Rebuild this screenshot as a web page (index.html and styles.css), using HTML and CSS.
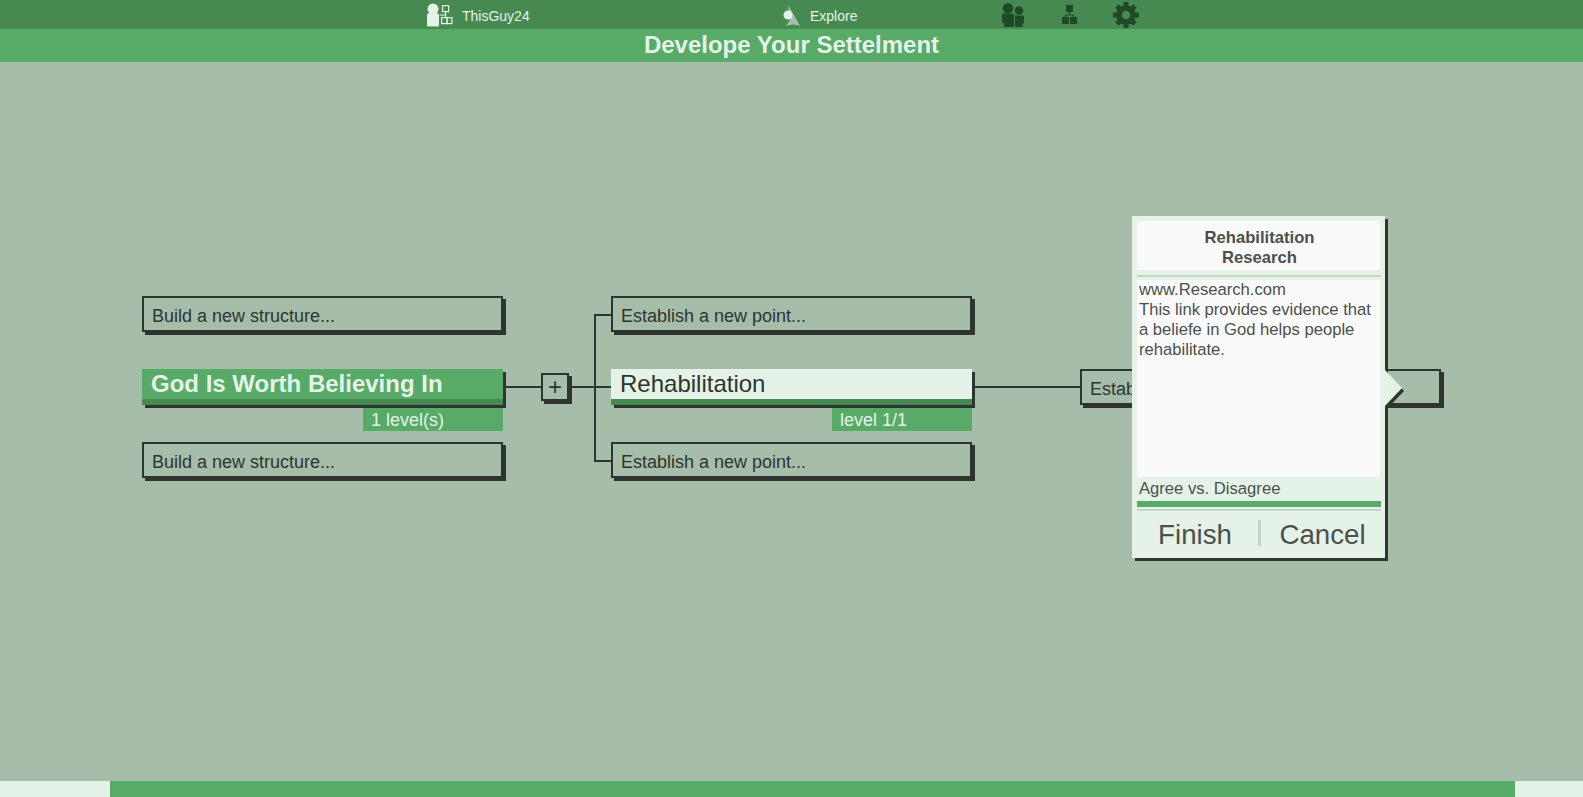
FILE: index.html
```html
<!DOCTYPE html>
<html lang="en">

<head>
    <meta charset="UTF-8" />
    <title>Develope Your Settelment</title>
    <link rel="stylesheet" href="styles.css">
</head>

<body>
    <nav class="top-bar">
        <a class="nav-item user-item">
            <svg class="nav-icon" width="26" height="26" viewBox="0 0 26 26">
                <ellipse cx="6" cy="7" rx="5.500" ry="5.500" fill="#e4f2e7"/>
                <path fill="#e4f2e7" d="M2 11h8l2 1.500v11q0 1-1 1H1q-1 0-1-1v-11z"/>
                <g fill="none" stroke="#e4f2e7" stroke-width="1.200">
                    <rect x="15.600" y="3.600" width="6" height="6"/>
                    <rect x="14.600" y="15.600" width="5.500" height="6"/>
                    <rect x="20.100" y="15.600" width="4.800" height="6"/>
                    <path d="M18.600 9.600v3.400h-6M18.600 13v2.600"/>
                </g>
            </svg>
            ThisGuy24
        </a>
        <a class="nav-item explore-item">
            <svg class="nav-icon" width="20" height="24" viewBox="0 0 20 24">
                <path fill="#a7bfab" d="M6 2Q12 12 18 23 11 20 4 23L8 17z"/>
                <circle cx="6" cy="12" r="4.500" fill="#e4f2e7"/>
            </svg>
            Explore
        </a>
        <svg class="tool people-tool" width="22" height="24" viewBox="0 0 22 24">
            <g fill="#1f4a28">
                <circle cx="6" cy="5.300" r="5.300"/>
                <path d="M1 10.500h10l1 1.500v12H2v-4H0v-8z"/>
                <circle cx="17" cy="7.500" r="4.300"/>
                <path d="M13 12.500h8l1 1v7h-1.500V24H13z"/>
            </g>
        </svg>
        <svg class="tool tree-tool" width="15" height="19" viewBox="0 0 15 19">
            <g fill="#1f4a28">
                <rect x="4" y="0" width="7" height="7"/>
                <rect x="0" y="12" width="7" height="7"/>
                <rect x="8" y="12" width="7" height="7"/>
            </g>
            <path fill="none" stroke="#1f4a28" d="M7.500 7v3M3.500 12v-2h8v2"/>
        </svg>
        <svg class="tool gear-tool" width="26" height="26" viewBox="0 0 26 26">
            <circle cx="13" cy="13" r="7" fill="none" stroke="#1f4a28" stroke-width="5.500"/>
            <path stroke="#1f4a28" stroke-width="5" d="M13 0v5M13 21v5M0 13h5M21 13h5M4 4l3.500 3.500M18.500 18.500 22 22M4 22l3.500-3.500M18.500 7.500 22 4"/>
        </svg>
    </nav>

    <h1 class="title-bar">Develope Your Settelment</h1>

    <main class="canvas">
        <div class="column">
            <div class="card">Build a new structure...</div>
            <div class="card selected">
                God Is Worth Believing In
                <span class="level">1 level(s)</span>
            </div>
            <div class="card">Build a new structure...</div>
        </div>

        <div class="link">
            <span class="line short"></span>
            <button class="plus">+</button>
            <span class="line"></span>
            <div class="bracket"><span class="line"></span></div>
        </div>

        <div class="column">
            <div class="card">Establish a new point...</div>
            <div class="card active">
                Rehabilitation
                <span class="level">level 1/1</span>
            </div>
            <div class="card">Establish a new point...</div>
        </div>

        <div class="link"><span class="line"></span></div>

        <div class="column end">
            <div class="card">Establish a new point...</div>

            <section class="popup">
                <header class="popup-head">Rehabilitation<br>Research</header>
                <hr class="rule">
                <div class="popup-body">
                    www.Research.com<br>
                    This link provides evidence that a beliefe in God helps people rehabilitate.
                </div>
                <p class="popup-vote">Agree vs. Disagree</p>
                <div class="vote-bar"></div>
                <hr class="rule">
                <div class="popup-actions">
                    <button class="action finish">Finish</button>
                    <button class="action cancel">Cancel</button>
                </div>
            </section>
        </div>
    </main>

    <footer class="bottom-bar">
        <div class="progress"></div>
    </footer>
</body>

</html>
```

FILE: styles.css
```css
* {
    box-sizing: border-box;
}

body {
    margin: 0;
    height: 797px;
    overflow: hidden;
    display: flex;
    flex-direction: column;
    background-color: #a6bda9;
    font-family: "Liberation Sans", Arial, sans-serif;
    color: #2e352e;
}

.top-bar {
    height: 29px;
    display: flex;
    align-items: center;
    padding-left: 427px;
    background-color: #468a52;
}

.nav-item {
    display: flex;
    align-items: center;
    padding-top: 2px;
    font-size: 14px;
    color: #e4f2e7;
}

.nav-icon {
    margin: -2px 9px 0 0;
}

.user-item {
    width: 355px;
}

.explore-item {
    width: 220px;
}

.explore-item .nav-icon {
    margin-right: 8px;
}

.people-tool {
    margin-right: 38px;
}

.tree-tool {
    margin-right: 36px;
}

.title-bar {
    margin: 0;
    height: 33px;
    line-height: 31px;
    text-align: center;
    font-size: 24px;
    font-weight: bold;
    color: #e4f2e7;
    background-color: #57ab67;
}

.canvas {
    flex: 1;
    display: flex;
    align-items: flex-start;
    padding: 234px 0 0 142px;
}

.column {
    width: 361px;
    display: flex;
    flex-direction: column;
    gap: 37px;
    position: relative;
}

.column.end {
    padding-top: 73px;
}

.card {
    position: relative;
    height: 36px;
    padding: 0 8px;
    line-height: 37px;
    font-size: 18px;
    border: 2px solid #2e352e;
    box-shadow: 3px 3px 0 #2e352e;
}

.card.selected,
.card.active {
    padding: 0 9px;
    border: 0;
    border-bottom: 6px solid #468a52;
    line-height: 30px;
    font-size: 24px;
}

.card.selected {
    font-weight: bold;
    color: #e4f2e7;
    background-color: #57ab67;
}

.card.active {
    background-color: #e4f2e7;
}

.level {
    position: absolute;
    top: 39px;
    right: 0;
    width: 140px;
    height: 23px;
    padding-left: 8px;
    line-height: 24px;
    font-size: 18px;
    font-weight: normal;
    color: #e4f2e7;
    background-color: #57ab67;
}

.link {
    width: 108px;
    height: 36px;
    margin-top: 73px;
    display: flex;
    align-items: center;
}

.line {
    flex: 1;
    height: 2px;
    background-color: #2e352e;
}

.line.short {
    flex: none;
    width: 38px;
}

.plus {
    width: 28px;
    height: 28px;
    margin: 0 3px 0 0;
    padding: 0;
    line-height: 22px;
    text-align: center;
    font-family: inherit;
    font-size: 24px;
    color: #2e352e;
    background-color: #a6bda9;
    border: 2px solid #2e352e;
    box-shadow: 3px 3px 0 #2e352e;
}

.bracket {
    flex: none;
    width: 17px;
    height: 148px;
    margin-top: 2px;
    display: flex;
    align-items: center;
    border: 2px solid #2e352e;
    border-right: 0;
}

.bracket .line {
    margin-top: -2px;
}

.popup {
    position: absolute;
    top: -80px;
    left: 52px;
    width: 253px;
    height: 342px;
    padding: 5px 4px 0 5px;
    display: flex;
    flex-direction: column;
    color: #4b504c;
    background-color: #e4f2e7;
    box-shadow: 3px 3px 0 #2e352e;
}

/* pointer on the right edge */
.popup::before,
.popup::after {
    content: "";
    position: absolute;
    top: 154px;
    left: 100%;
    border-style: solid;
    border-width: 18px 0 18px 17px;
    border-color: transparent transparent transparent #e4f2e7;
}

.popup::before {
    top: 157px;
    left: calc(100% + 2px);
    border-left-color: #2e352e;
}

.popup-head {
    width: 243px;
    height: 49px;
    padding: 7px 0 0 2px;
    line-height: 20px;
    text-align: center;
    font-size: 16.640px;
    font-weight: bold;
    background-color: #fafafa;
}

.rule {
    width: 244px;
    height: 2px;
    margin: 5px 0 3px;
    border: 0;
    background-color: #c5d3c8;
}

.popup-body {
    width: 243px;
    height: 197px;
    padding: 0 2px;
    line-height: 20px;
    font-size: 16.640px;
    background-color: #fafafa;
}

.popup-vote {
    margin: 0;
    height: 24px;
    padding-left: 2px;
    line-height: 23px;
    font-size: 16.640px;
}

.vote-bar {
    width: 244px;
    height: 6px;
    background-color: #57ab67;
}

.vote-bar + .rule {
    margin: 2px 0 9px;
}

.popup-actions {
    display: flex;
    height: 26px;
}

.action {
    padding: 0;
    border: 0;
    background: none;
    line-height: 30px;
    font-family: inherit;
    font-size: 27.700px;
    color: inherit;
}

.action.finish {
    flex: none;
    width: 121px;
    padding-right: 5px;
}

.action.cancel {
    flex: 1;
    padding-left: 3px;
    border-left: 3px solid #c5d3c8;
}

.bottom-bar {
    height: 16px;
    padding: 0 68px 0 110px;
    background-color: #e4f2e7;
}

.progress {
    height: 100%;
    background-color: #57ab67;
}
```
